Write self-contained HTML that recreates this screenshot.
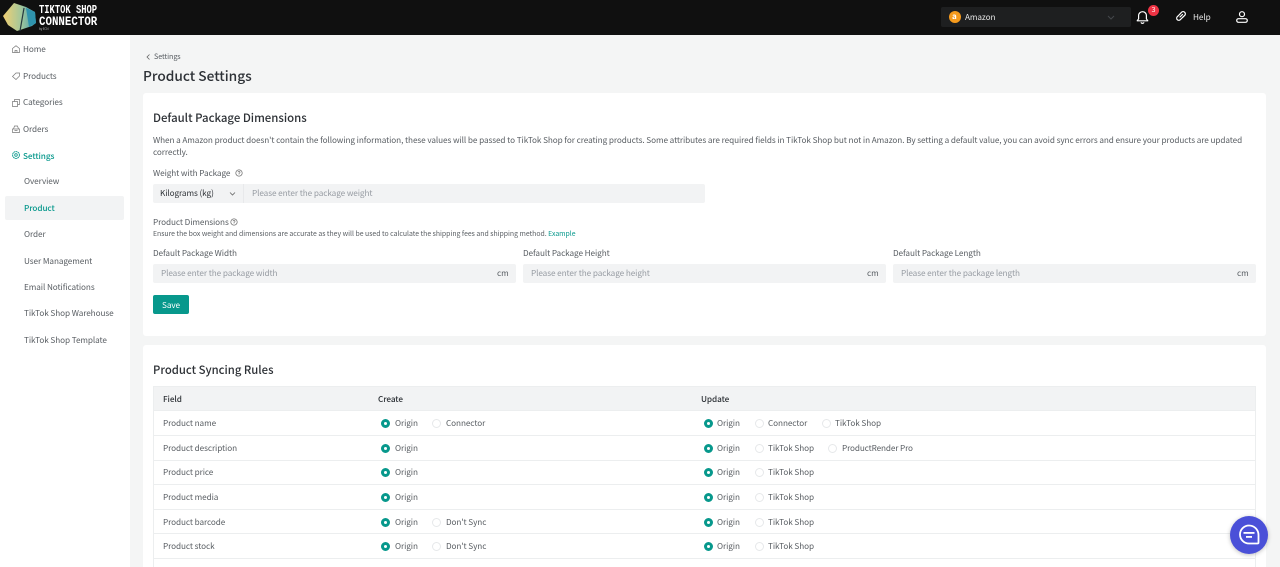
<!DOCTYPE html>
<html><head><meta charset="utf-8"><style>
*{box-sizing:border-box}
html,body{margin:0;padding:0}
body{width:1280px;height:567px;overflow:hidden;position:relative;background:#f4f5f5;font-family:"Noto Sans CJK SC","Liberation Sans",sans-serif;font-size:8.2px;letter-spacing:-.08px;color:#4b5055}
.t{position:absolute;white-space:nowrap;line-height:14px}
.b{position:absolute}
.g{color:#585d62}.d{color:#2d3136}.p{color:#969ba2}
.r{position:absolute;width:9px;height:9px;border-radius:50%;background:#fff;border:1px solid #e6e8ea}
.r.on{background:#fff;border:3px solid #07988c}
.l{position:absolute;left:153px;width:1103px;height:1px;background:#eceeef}
svg{position:absolute;overflow:visible}
</style></head><body>
<!-- Header -->
<div class="b" style="left:0;top:0;width:1280px;height:35px;background:#101010"></div>
<svg style="left:3px;top:3px" width="33" height="28" viewBox="0 0 33 28"><defs><linearGradient id="lg" x1="0" x2="1" y1="0" y2="0"><stop offset="0" stop-color="#f2cf72"/><stop offset=".55" stop-color="#a3c79b"/><stop offset="1" stop-color="#3f9ab3"/></linearGradient></defs><path d="M0 13 L11 0 L23 4 L32 9 L33 20 L29 23 L14 28 L5 22Z" fill="url(#lg)"/><path d="M21 5L17 28" stroke="#26383f" stroke-width="1.2"/><path d="M23 5 L32 9 L33 20 L26 24Z" fill="#2f93ad"/></svg>
<div class="t" style="left:39px;top:5px;color:#fff;font:700 11.5px/12px 'Liberation Mono',monospace;letter-spacing:0;transform-origin:0 0;transform:scaleX(.765)">TIKTOK SHOP</div>
<div class="t" style="left:39px;top:15px;color:#fff;font:700 13px/13px 'Liberation Mono',monospace;letter-spacing:0;transform-origin:0 0;transform:scaleX(.83)">CONNECTOR</div>
<div class="t" style="left:39px;top:27px;color:#bbb;font-size:3px;line-height:4px">by ECN</div>

<div class="b" style="left:941px;top:7px;width:190px;height:20px;background:#1e1f20;border-radius:2px"></div>
<div class="b" style="left:949px;top:11px;width:12px;height:12px;border-radius:50%;background:#f59a1c"></div>
<div class="t" style="left:952px;top:10px;color:#fff;font-size:8px;font-weight:700">a</div>
<div class="t" style="left:965px;top:10px;color:#e6e6e6">Amazon</div>
<svg style="left:1107px;top:15px" width="8" height="5" viewBox="0 0 8 5"><path d="M1 1l3 3 3-3" stroke="#44474b" fill="none" stroke-width="1"/></svg>
<svg style="left:1136px;top:10px" width="13" height="14" viewBox="0 0 13 14"><path d="M1.2 10.8h10.6l-1.4-2V5.6a3.9 3.9 0 0 0-7.800 0v3.200zM5 12.300a1.600 1.600 0 0 0 3 0" fill="none" stroke="#fff" stroke-width="1.200" stroke-linejoin="round"/></svg>
<div class="b" style="left:1148px;top:5px;width:11px;height:11px;border-radius:50%;background:#ee3344"></div>
<div class="t" style="left:1148px;top:4px;width:11px;text-align:center;color:#fff;font-size:7px;line-height:12px">3</div>
<svg style="left:1175px;top:10px" width="12" height="12" viewBox="0 0 12 12"><path d="M5 7l2.500-2.500M4.500 4.500l2-2.200a2 2 0 0 1 3.200 3.200L7.500 7.500M4.500 4.500L2.300 6.700a2 2 0 0 0 3 3L7.500 7.500" fill="none" stroke="#fff" stroke-width="1.200" stroke-linecap="round"/></svg>
<div class="t" style="left:1193px;top:10px;color:#e8e8e8">Help</div>
<svg style="left:1236px;top:11px" width="12" height="12" viewBox="0 0 12 12"><circle cx="6" cy="3.200" r="2.500" fill="none" stroke="#fff" stroke-width="1.200"/><rect x=".7" y="7.700" width="10.600" height="3.600" rx="1.800" fill="none" stroke="#fff" stroke-width="1.200"/></svg>

<!-- Sidebar -->
<div class="b" style="left:0;top:35px;width:130px;height:532px;background:#fff"></div>
<div class="b" style="left:5px;top:196px;width:119px;height:24px;background:#f2f3f4;border-radius:2px"></div>
<svg style="left:12px;top:45px" width="8" height="8" viewBox="0 0 8 8"><path d="M.5 3.500L4 .7l3.500 2.800V7.500h-7zM3 7.500V5.500h2v2" fill="none" stroke="#777" stroke-width=".7"/></svg>
<div class="t g" style="left:23px;top:42px">Home</div>
<svg style="left:12px;top:72px" width="8" height="8" viewBox="0 0 8 8"><path d="M.5 4.500L4 1h3.500v3L4 7.500z" fill="none" stroke="#777" stroke-width=".7"/></svg>
<div class="t g" style="left:23px;top:69px">Products</div>
<svg style="left:12px;top:99px" width="8" height="8" viewBox="0 0 8 8"><path d="M.5 2.500h5v5h-5zM2.500 2.500V.5h5v5h-2" fill="none" stroke="#777" stroke-width=".7"/></svg>
<div class="t g" style="left:23px;top:95px">Categories</div>
<svg style="left:12px;top:125px" width="8" height="8" viewBox="0 0 8 8"><path d="M.5 4h7v3.500h-7zM1.500 4l1-3h3l1 3M2.500 5.500h3" fill="none" stroke="#777" stroke-width=".7"/></svg>
<div class="t g" style="left:23px;top:122px">Orders</div>
<svg style="left:12px;top:151px" width="8" height="8" viewBox="0 0 8 8"><circle cx="4" cy="4" r="3.400" fill="none" stroke="#07988c" stroke-width=".9" stroke-dasharray="1.800 .4"/><circle cx="4" cy="4" r="1.300" fill="none" stroke="#07988c" stroke-width=".8"/></svg>
<div class="t" style="left:23px;top:149px;color:#07988c;font-weight:500">Settings</div>
<div class="t g" style="left:24px;top:174px">Overview</div>
<div class="t" style="left:24px;top:201px;color:#07988c;font-weight:500">Product</div>
<div class="t g" style="left:24px;top:227px">Order</div>
<div class="t g" style="left:24px;top:254px">User Management</div>
<div class="t g" style="left:24px;top:280px">Email Notifications</div>
<div class="t g" style="left:24px;top:306px">TikTok Shop Warehouse</div>
<div class="t g" style="left:24px;top:333px">TikTok Shop Template</div>

<!-- Breadcrumb -->
<svg style="left:146px;top:54px" width="4" height="6" viewBox="0 0 4 6"><path d="M3.500.5L1 3l2.500 2.500" fill="none" stroke="#666" stroke-width=".8"/></svg>
<div class="t g" style="left:154px;top:50px;font-size:7.200px">Settings</div>
<div class="t d" style="left:143px;top:65px;font-size:13.700px;line-height:20px;font-weight:500;letter-spacing:0">Product Settings</div>

<!-- Card 1 -->
<div class="b" style="left:143px;top:93px;width:1123px;height:243px;background:#fff;border-radius:3px"></div>
<div class="t d" style="left:153px;top:109px;font-size:11.400px;line-height:18px;font-weight:500;letter-spacing:0">Default Package Dimensions</div>
<div class="t g" style="left:153px;top:133px">When a Amazon product doesn't contain the following information, these values will be passed to TikTok Shop for creating products. Some attributes are required fields in TikTok Shop but not in Amazon. By setting a default value, you can avoid sync errors and ensure your products are updated</div>
<div class="t g" style="left:153px;top:145px">correctly.</div>
<div class="t g" style="left:153px;top:166px">Weight with Package</div>
<svg style="left:235px;top:169px" width="8" height="8" viewBox="0 0 8 8"><circle cx="4" cy="4" r="3.200" fill="none" stroke="#666" stroke-width=".7"/><path d="M3 3.200a1 1 0 1 1 1 1v.6M4 5.500v.6" fill="none" stroke="#666" stroke-width=".6"/></svg>
<div class="b" style="left:153px;top:184px;width:552px;height:19px;background:#f2f3f4;border-radius:2px"></div>
<div class="b" style="left:243px;top:184px;width:1px;height:19px;background:#e8e9eb"></div>
<div class="t d" style="left:160px;top:186px">Kilograms (kg)</div>
<svg style="left:229px;top:192px" width="7" height="4" viewBox="0 0 7 4"><path d="M1 .5l2.500 2.500L6 .5" fill="none" stroke="#666" stroke-width=".8"/></svg>
<div class="t p" style="left:252px;top:186px">Please enter the package weight</div>
<div class="t g" style="left:153px;top:215px">Product Dimensions</div>
<svg style="left:230px;top:218px" width="8" height="8" viewBox="0 0 8 8"><circle cx="4" cy="4" r="3.200" fill="none" stroke="#666" stroke-width=".7"/><path d="M3 3.200a1 1 0 1 1 1 1v.6M4 5.500v.6" fill="none" stroke="#666" stroke-width=".6"/></svg>
<div class="t g" style="left:153px;top:226px;font-size:6.870px;letter-spacing:0">Ensure the box weight and dimensions are accurate as they will be used to calculate the shipping fees and shipping method. <span style="color:#07988c">Example</span></div>

<div class="t g" style="left:153px;top:246px">Default Package Width</div>
<div class="t g" style="left:523px;top:246px">Default Package Height</div>
<div class="t g" style="left:893px;top:246px">Default Package Length</div>
<div class="b" style="left:153px;top:264px;width:363px;height:19px;background:#f2f3f4;border-radius:2px"></div>
<div class="b" style="left:523px;top:264px;width:363px;height:19px;background:#f2f3f4;border-radius:2px"></div>
<div class="b" style="left:893px;top:264px;width:363px;height:19px;background:#f2f3f4;border-radius:2px"></div>
<div class="t p" style="left:161px;top:266px">Please enter the package width</div>
<div class="t p" style="left:531px;top:266px">Please enter the package height</div>
<div class="t p" style="left:901px;top:266px">Please enter the package length</div>
<div class="t g" style="left:497px;top:266px">cm</div>
<div class="t g" style="left:867px;top:266px">cm</div>
<div class="t g" style="left:1237px;top:266px">cm</div>
<div class="b" style="left:153px;top:295px;width:36px;height:19px;background:#07988c;border-radius:2px"></div>
<div class="t" style="left:153px;top:298px;width:36px;text-align:center;color:#fff">Save</div>

<!-- Card 2 -->
<div class="b" style="left:143px;top:345px;width:1123px;height:222px;background:#fff;border-radius:3px 3px 0 0"></div>
<div class="t d" style="left:153px;top:361px;font-size:11.300px;line-height:18px;font-weight:500;letter-spacing:0">Product Syncing Rules</div>
<div class="b" style="left:153px;top:386px;width:1103px;height:181px;border:1px solid #eceeef;border-bottom:0"></div>
<div class="b" style="left:153px;top:386px;width:1103px;height:25px;background:#f2f3f4;border:1px solid #eceeef"></div>
<div class="l" style="top:435px"></div><div class="l" style="top:460px"></div><div class="l" style="top:484px"></div><div class="l" style="top:509px"></div><div class="l" style="top:533px"></div><div class="l" style="top:558px"></div>
<div class="t d" style="left:163px;top:392px;font-weight:500">Field</div>
<div class="t d" style="left:378px;top:392px;font-weight:500">Create</div>
<div class="t d" style="left:701px;top:392px;font-weight:500">Update</div>

<div class="t g" style="left:163px;top:416px">Product name</div>
<div class="t g" style="left:163px;top:441px">Product description</div>
<div class="t g" style="left:163px;top:465px">Product price</div>
<div class="t g" style="left:163px;top:490px">Product media</div>
<div class="t g" style="left:163px;top:515px">Product barcode</div>
<div class="t g" style="left:163px;top:539px">Product stock</div>

<div class="r on" style="left:381px;top:419px"></div><div class="t g" style="left:395px;top:416px">Origin</div>
<div class="r" style="left:432px;top:419px"></div><div class="t g" style="left:446px;top:416px">Connector</div>
<div class="r on" style="left:381px;top:444px"></div><div class="t g" style="left:395px;top:441px">Origin</div>
<div class="r on" style="left:381px;top:468px"></div><div class="t g" style="left:395px;top:465px">Origin</div>
<div class="r on" style="left:381px;top:493px"></div><div class="t g" style="left:395px;top:490px">Origin</div>
<div class="r on" style="left:381px;top:518px"></div><div class="t g" style="left:395px;top:515px">Origin</div>
<div class="r" style="left:432px;top:518px"></div><div class="t g" style="left:446px;top:515px">Don't Sync</div>
<div class="r on" style="left:381px;top:542px"></div><div class="t g" style="left:395px;top:539px">Origin</div>
<div class="r" style="left:432px;top:542px"></div><div class="t g" style="left:446px;top:539px">Don't Sync</div>

<div class="r on" style="left:704px;top:419px"></div><div class="t g" style="left:717px;top:416px">Origin</div>
<div class="r" style="left:755px;top:419px"></div><div class="t g" style="left:768px;top:416px">Connector</div>
<div class="r" style="left:822px;top:419px"></div><div class="t g" style="left:835px;top:416px">TikTok Shop</div>
<div class="r on" style="left:704px;top:444px"></div><div class="t g" style="left:717px;top:441px">Origin</div>
<div class="r" style="left:755px;top:444px"></div><div class="t g" style="left:768px;top:441px">TikTok Shop</div>
<div class="r" style="left:828px;top:444px"></div><div class="t g" style="left:842px;top:441px;letter-spacing:-.12px">ProductRender Pro</div>
<div class="r on" style="left:704px;top:468px"></div><div class="t g" style="left:717px;top:465px">Origin</div>
<div class="r" style="left:755px;top:468px"></div><div class="t g" style="left:768px;top:465px">TikTok Shop</div>
<div class="r on" style="left:704px;top:493px"></div><div class="t g" style="left:717px;top:490px">Origin</div>
<div class="r" style="left:755px;top:493px"></div><div class="t g" style="left:768px;top:490px">TikTok Shop</div>
<div class="r on" style="left:704px;top:518px"></div><div class="t g" style="left:717px;top:515px">Origin</div>
<div class="r" style="left:755px;top:518px"></div><div class="t g" style="left:768px;top:515px">TikTok Shop</div>
<div class="r on" style="left:704px;top:542px"></div><div class="t g" style="left:717px;top:539px">Origin</div>
<div class="r" style="left:755px;top:542px"></div><div class="t g" style="left:768px;top:539px">TikTok Shop</div>

<!-- Chat -->
<div class="b" style="left:1230px;top:516px;width:38px;height:38px;border-radius:50%;background:#4a50d8;box-shadow:0 1px 4px rgba(0,0,0,.25)"></div>
<svg style="left:1238px;top:524px" width="22" height="22" viewBox="0 0 22 22"><path d="M11 1.500a9 9 0 1 0 0 18h8.500a1 1 0 0 0 1-1V11a9.500 9.500 0 0 0-9.500-9.500z" fill="none" stroke="#fff" stroke-width="1.800"/><rect x="5.500" y="8" width="11" height="1.800" fill="#fff"/><rect x="8" y="12" width="6" height="1.800" fill="#fff"/></svg>
</body></html>
